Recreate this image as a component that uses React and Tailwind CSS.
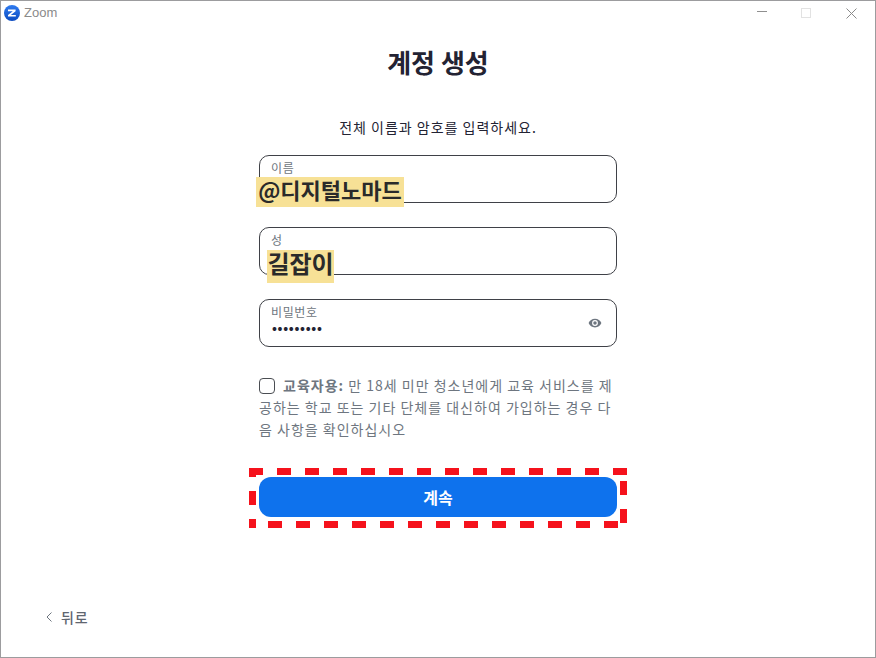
const sans = "font-['Noto_Sans_CJK_KR','Noto_Sans',sans-serif]";

function Field({ label, children }) {
  return (
    <div className="relative h-[48px] w-[358px] rounded-[10px] border border-[#3f4147] bg-white pl-[11px]">
      <div className="pt-[3px] text-[12px] leading-[17px] tracking-[0.6px] text-[#6e7680]">{label}</div>
      {children}
    </div>
  );
}

function Note({ className, children }) {
  return (
    <span className={`absolute flex items-center justify-center bg-[#f7e196] pb-[7px] font-bold leading-none text-[#2a2a2a] ${className}`}>
      {children}
    </span>
  );
}

export default function App() {
  return (
    <div className={`relative flex h-[658px] w-[876px] flex-col overflow-hidden border border-[#9c9c9e] bg-white ${sans}`}>
      <header className="flex h-[24px] shrink-0 items-center justify-between">
        <div className="flex items-center gap-[4px] pl-[3px]">
          <svg width="16" height="16" viewBox="0 0 16 16">
            <defs>
              <linearGradient id="z" x1="0" y1="0" x2="0" y2="1">
                <stop offset="0" stopColor="#2f7bf0" />
                <stop offset="1" stopColor="#0b4bc0" />
              </linearGradient>
            </defs>
            <circle cx="8" cy="8" r="8" fill="url(#z)" />
            <path d="M4 4.6h7.6v1.6L6.8 10h5v1.6H4V10l4.8-3.8H4z" fill="#fff" />
          </svg>
          <span className="font-['Liberation_Sans',sans-serif] text-[13px] text-[#8a8a8a]">Zoom</span>
        </div>
        <div className="flex items-center pr-[18px]">
          <svg width="10" height="10" viewBox="0 0 10 10" className="mr-[34px]">
            <path d="M0 3.5h10" stroke="#8f8f8f" strokeWidth="1" />
          </svg>
          <svg width="10" height="10" viewBox="0 0 10 10" className="mr-[35px]">
            <rect x="0.5" y="0.5" width="9" height="9" fill="none" stroke="#e2e2e2" />
          </svg>
          <svg width="11" height="11" viewBox="0 0 11 11">
            <path d="M0.5 0.5l10 10M10.5 0.5l-10 10" stroke="#8a8a8a" strokeWidth="1" />
          </svg>
        </div>
      </header>

      <main className="flex flex-1 flex-col items-center">
        <h1 className="mt-[17px] text-[26px] font-bold leading-[40px] text-[#232333]">계정 생성</h1>
        <p className="mt-[35px] text-[14px] leading-[20px] tracking-[1px] text-[#232333]">전체 이름과 암호를 입력하세요.</p>

        <div className="mt-[18px] flex flex-col gap-[24px]">
          <Field label="이름" />
          <Field label="성" />
          <Field label="비밀번호">
            <div className="mt-[1px] pl-[1px] text-[13px] font-bold leading-[13px] tracking-[0.7px] text-[#232333]">•••••••••</div>
            <svg width="14" height="14" viewBox="0 0 24 24" className="absolute right-[14px] top-[16px]" fill="#6e7680">
              <path d="M12 4.5C7 4.5 2.7 7.6 1 12c1.7 4.4 6 7.5 11 7.5s9.3-3.1 11-7.5c-1.7-4.4-6-7.5-11-7.5zM12 17a5 5 0 1 1 0-10 5 5 0 0 1 0 10zm0-8a3 3 0 1 0 0 6 3 3 0 0 0 0-6z" />
            </svg>
          </Field>
        </div>

        <div className="relative mt-[27px] w-[358px] break-all text-[14px] leading-[22px] tracking-[1px] text-[#6e7680]">
          <span className="mr-[8px] inline-block h-[16px] w-[16px] rounded-[4px] border border-[#4a4d52] align-[-3px]" />
          <b className="font-bold">교육자용:</b> 만 18세 미만 청소년에게 교육 서비스를 제공하는 학교 또는 기타 단체를 대신하여 가입하는 경우 다음 사항을 확인하십시오
        </div>

        <button className="mt-[37px] h-[40px] w-[358px] rounded-[12px] bg-[#0e72ed] text-[16px] font-bold text-white">계속</button>
      </main>

      <footer className="flex h-[52px] shrink-0 items-start pl-[45px] pt-[2px]">
        <div className="flex items-center gap-[8px] text-[14px] font-medium leading-[20px] tracking-[0.8px] text-[#5f6670]">
          <svg width="7" height="10" viewBox="0 0 7 10">
            <path d="M5.5 0.5L1 5l4.5 4.5" fill="none" stroke="#6e7680" strokeWidth="1" />
          </svg>
          뒤로
        </div>
      </footer>

      <Note className="left-[255px] top-[176px] h-[30px] w-[148px] text-[22px]">@디지털노마드</Note>
      <Note className="left-[266px] top-[249px] h-[33px] w-[67px] text-[24px]">길잡이</Note>

      <svg width="380" height="60" viewBox="0 0 380 60" className="absolute left-[248px] top-[467px]" fill="#f5121c">
        <rect x="0" y="0" width="14" height="7" />
        <rect x="0" y="0" width="7" height="9" />
        {Array.from({ length: 13 }, (_, i) => (
          <rect key={`t${i}`} x={28 + i * 28} y="0" width="14" height="7" />
        ))}
        <rect x="0" y="23" width="7" height="14" />
        <rect x="0" y="51" width="7" height="9" />
        {Array.from({ length: 13 }, (_, i) => (
          <rect key={`b${i}`} x={19 + i * 28} y="53" width="14" height="7" />
        ))}
        <rect x="371" y="13" width="7" height="14" />
        <rect x="371" y="41" width="7" height="14" />
      </svg>
    </div>
  );
}
